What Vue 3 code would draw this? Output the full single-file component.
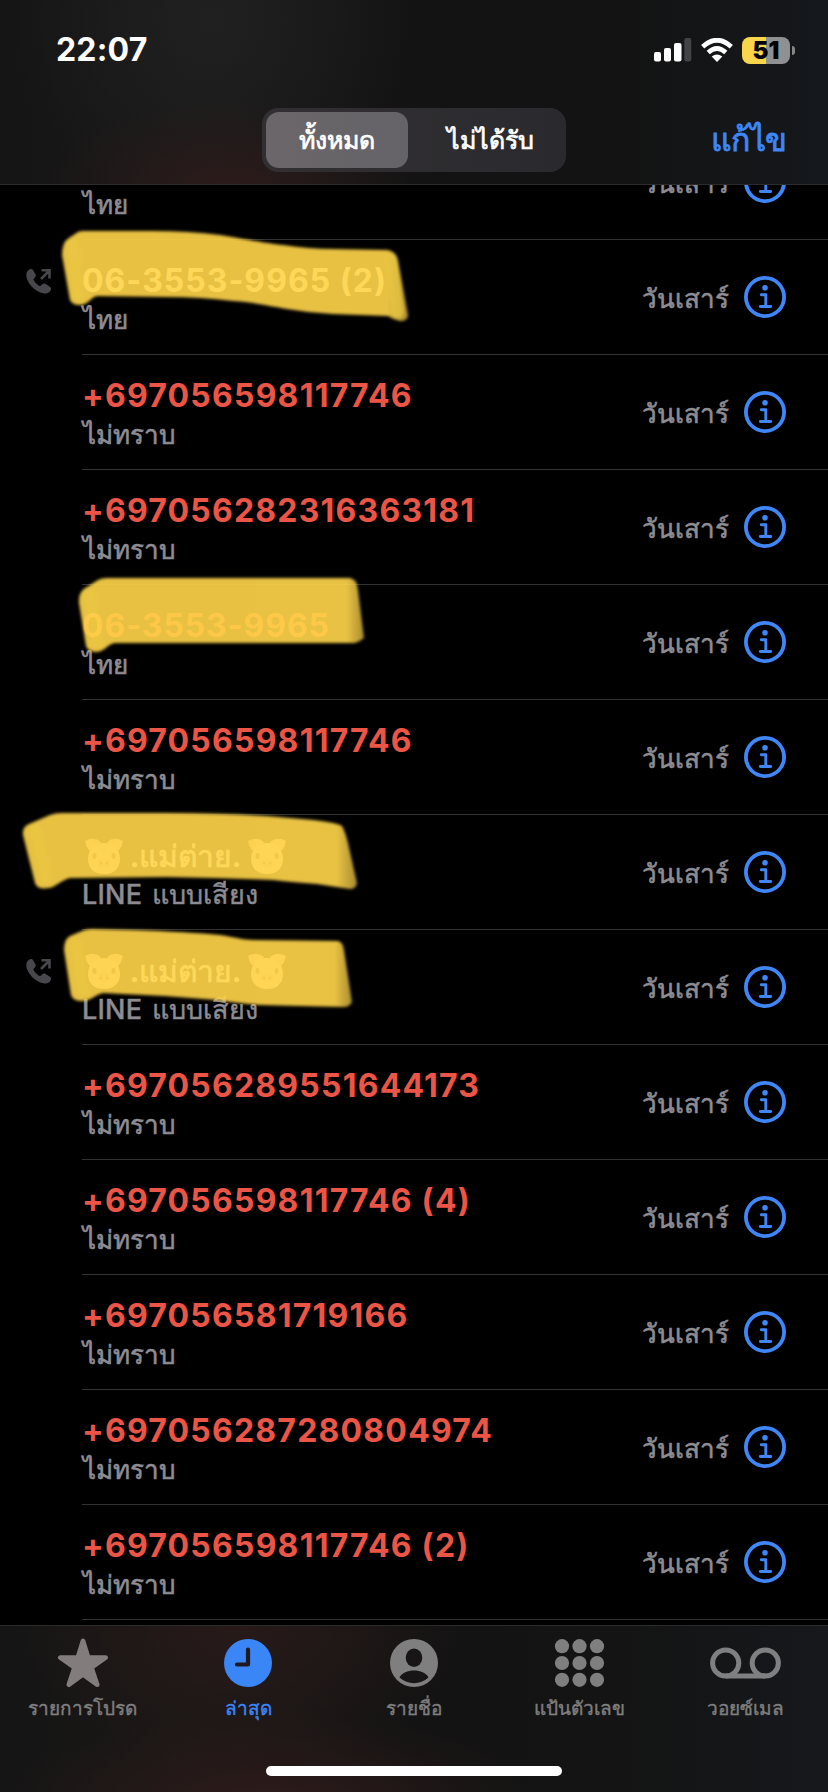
<script setup>
const rows = [
  { title: '', sub: 'ไทย' },
  {
    title: '06-3553-9965 (2)', sub: 'ไทย', kind: 'known', outgoing: true,
    brush: 'M62 15Q62 2 69-2L78-8Q80-9 84-9H150Q190-9 220-5C250 0 270 4 283 5Q310 9 333 9L387 10Q396 11 398 20L408 75Q408 81 400 81Q394 80 388 76L333 74Q310 73 287 69C265 65 250 62 233 61Q200 57 167 57L97 56C91 57 88 65 80 65Q72 65 70 60Z',
    ends: ['M73 4L78 55', 'M391 20L398 72']
  },
  { title: '+697056598117746', sub: 'ไม่ทราบ' },
  { title: '+697056282316363181', sub: 'ไม่ทราบ' },
  {
    title: '06-3553-9965', sub: 'ไทย', kind: 'spaced',
    brush: 'M79 18Q78 6 87 2L98-5Q102-7 107-7H350Q357-6 358 5L364 53Q361 56 355 58H115C109 58 104 67 97 67Q88 67 86 61Z',
    ends: ['M90 10L97 57']
  },
  { title: '+697056598117746', sub: 'ไม่ทราบ' },
  {
    title: '.แม่ต่าย.', sub: 'LINE แบบเสียง', kind: 'known', pigs: true,
    brush: 'M23 20Q22 12 29 9L50 0Q55-2 62-2L167-2Q220-2 267 1L313 5Q338 8 342 11Q345 16 348 28L357 68Q356 74 350 74L317 69Q290 67 273 65Q220 63 167 62L70 63C61 65 55 73 48 73Q37 75 35 68Z',
    ends: ['M36 16L46 62']
  },
  {
    title: '.แม่ต่าย.', sub: 'LINE แบบเสียง', kind: 'known', pigs: true, outgoing: true,
    brush: 'M64 20Q64 9 70 6L82 1Q86-1 92-1L133 0Q190 2 220 5C235 7 243 10 253 10L338 11Q343 12 344 20L352 72Q350 77 343 77L260 75Q235 73 217 70Q160 65 103 63C96 64 91 71 82 71Q73 71 71 65Z',
    ends: ['M76 14L83 61']
  },
  { title: '+697056289551644173', sub: 'ไม่ทราบ' },
  { title: '+697056598117746 (4)', sub: 'ไม่ทราบ' },
  { title: '+697056581719166', sub: 'ไม่ทราบ' },
  { title: '+697056287280804974', sub: 'ไม่ทราบ' },
  { title: '+697056598117746 (2)', sub: 'ไม่ทราบ' }
]
const dots = [8, 25.5, 43]
</script>

<template>
  <div class="phone">
    <svg class="defs" width="0" height="0">
      <defs>
        <linearGradient id="marker">
          <stop offset="0" stop-color="#fed449" />
          <stop offset=".94" stop-color="#fed449" />
          <stop offset="1" stop-color="#fed449" stop-opacity=".72" />
        </linearGradient>
        <g id="pig">
          <path d="M0 4Q9-1 16 5L8 16Q2 14 0 4ZM38 4Q29-1 22 5L30 16Q36 14 38 4Z" fill="#f0b4b4" />
          <path d="M19 6C29 6 35 13 35 22C35 31 29 37 19 37S3 31 3 22C3 13 9 6 19 6Z" fill="#ffd9d0" />
          <ellipse cx="9.500" cy="19" rx="2" ry="3" fill="#604848" />
          <ellipse cx="28.500" cy="19" rx="2" ry="3" fill="#604848" />
          <ellipse cx="19" cy="26" rx="7" ry="5" fill="#f4c3be" />
          <circle cx="16" cy="26" r="1.500" fill="#905858" />
          <circle cx="22" cy="26" r="1.500" fill="#905858" />
        </g>
      </defs>
    </svg>
    <header class="header">
      <div class="status">
        <span class="time">22:07</span>
        <div class="indicators">
          <svg width="38" height="24" viewBox="0 0 38 24" fill="#fff">
            <rect x="0" y="14" width="7" height="9.500" rx="2" />
            <rect x="10" y="10" width="7" height="13.500" rx="2" />
            <rect x="20" y="5" width="7.500" height="18.500" rx="2" />
            <rect x="30.300" y="0" width="7" height="23.500" rx="2" fill="#424346" />
          </svg>
          <svg class="wifi" width="32" height="24" viewBox="0 0 32 24" fill="none" stroke="#fff" stroke-width="4.700">
            <path d="M1.700 8.700Q16-4.300 30.300 8.700" />
            <path d="M7.200 14.500Q16 6.500 24.800 14.500" />
            <path d="M16 24L10.700 18.600Q16 14.400 21.300 18.600Z" fill="#fff" stroke="none" />
          </svg>
          <span class="battery">51</span>
          <span class="nub" />
        </div>
      </div>
      <div class="nav">
        <div class="segments">
          <span class="segment on">ทั้งหมด</span>
          <span class="segment">ไม่ได้รับ</span>
        </div>
        <span class="edit">แก้ไข</span>
      </div>
    </header>

    <main class="list">
      <div v-for="(row, i) in rows" :key="i" class="row">
        <div class="lead">
          <svg v-if="row.outgoing" width="26" height="26" viewBox="0 0 26 26">
            <path d="M4 1.200C1.500 2.500 0 4.500 .3 8C1 15 9 24.500 18.500 25.500C22 25.800 24.500 24 25 21.300C25.200 20 24.500 19.300 23.500 18.600L19.700 16C18.300 15.200 17 15.500 16 16.600L14.800 17.800C14.200 18.200 13.600 18.100 13 17.700C10.800 16.200 8.900 14.200 7.700 12.200C7.300 11.500 7.400 11 7.900 10.500L9 9.300C9.900 8.300 10 7.300 9.300 6L7 2C6.300 .8 5 .7 4 1.200Z" fill="#48484c" />
            <path d="M15 11L23 3M15.500 2.300H23.500V10.500" fill="none" stroke="#48484c" stroke-width="2.600" />
          </svg>
        </div>
        <div class="body">
          <div class="text">
            <div class="title" :class="row.kind">
              <svg v-if="row.pigs" class="pig" width="38" height="38"><use href="#pig" /></svg>
              <span :class="{ thai: row.pigs }">{{ row.title }}</span>
              <svg v-if="row.pigs" class="pig" width="38" height="38"><use href="#pig" /></svg>
            </div>
            <div class="sub" :class="{ line: row.pigs }">{{ row.sub }}</div>
          </div>
          <span class="day">วันเสาร์</span>
          <svg class="info" width="42" height="42" viewBox="0 0 42 42" fill="none" stroke="#3f86f7">
            <circle cx="21" cy="21" r="19.100" stroke-width="3.800" />
            <circle cx="21" cy="11.700" r="2.800" fill="#3f86f7" stroke="none" />
            <path d="M17.300 18.700H21.800V30.500M16.300 30.500H26.700" stroke-width="2.900" stroke-linecap="round" stroke-linejoin="round" />
          </svg>
        </div>
        <svg v-if="row.brush" class="brush" width="828" height="115" viewBox="0 0 828 115">
          <g opacity=".915">
            <path :d="row.brush" fill="url(#marker)" />
            <path v-for="end in row.ends" :key="end" :d="end" fill="none" stroke="#ffda48" stroke-width="12" stroke-linecap="round" opacity=".7" />
          </g>
        </svg>
      </div>
    </main>

    <footer class="tabs">
      <div class="tab-row">
        <div class="tab">
          <svg width="52" height="50" viewBox="-.5 0 53 50" fill="#827d7c" stroke="#827d7c" stroke-width="5" stroke-linejoin="round">
            <path d="M26 2.700L31.200 19.500H49L34.500 29.700L40.300 47L26 36.600L11.700 47L17.500 29.700L3 19.500H20.800Z" />
          </svg>
          <span>รายการโปรด</span>
        </div>
        <div class="tab on">
          <svg width="48" height="48" viewBox="0 0 48 48">
            <circle cx="24" cy="24" r="24" fill="#3b86f7" />
            <path d="M24 10.500V25.500H13" fill="none" stroke="#1e1a20" stroke-width="4.200" stroke-linecap="round" stroke-linejoin="round" />
          </svg>
          <span>ล่าสุด</span>
        </div>
        <div class="tab">
          <svg width="48" height="48" viewBox="0 0 48 48">
            <circle cx="24" cy="24" r="24" fill="#807f7f" />
            <ellipse cx="24" cy="18.700" rx="8.300" ry="9.200" fill="#171516" />
            <path d="M9.500 38.500C14 29.200 34 29.200 38.500 38.500C30 46 18 46 9.500 38.500Z" fill="#171516" />
          </svg>
          <span>รายชื่อ</span>
        </div>
        <div class="tab">
          <svg width="51" height="48" viewBox="0 0 51 48" fill="#7f7f7f">
            <template v-for="(y, r) in [7.2, 24, 40.8]" :key="r">
              <circle v-for="x in dots" :key="x" :cx="x" :cy="y" r="7.100" />
            </template>
          </svg>
          <span>แป้นตัวเลข</span>
        </div>
        <div class="tab">
          <svg width="71" height="48" viewBox="0 0 71 48" fill="none" stroke="#7f8081" stroke-width="5">
            <circle cx="15.700" cy="24" r="13.100" />
            <circle cx="55.300" cy="24" r="13.100" />
            <path d="M15.700 37H55.300" />
          </svg>
          <span>วอยซ์เมล</span>
        </div>
      </div>
      <div class="home" />
    </footer>
  </div>
</template>

<style>
html, body { background: #000; }
</style>

<style scoped>
.phone {
  width: 828px;
  height: 1792px;
  display: flex;
  flex-direction: column;
  overflow: hidden;
  background: #000;
  font-family: Inter, "Noto Sans", "Liberation Sans", sans-serif;
}
.defs { position: absolute; }
.header {
  flex: none;
  box-sizing: border-box;
  height: 185px;
  border-bottom: 1px solid #2c2c2d;
  background:
    radial-gradient(ellipse 190px 90px at 230px 190px, #2c1b1a, transparent),
    radial-gradient(ellipse 200px 200px at 210px 20px, #202020, transparent),
    linear-gradient(90deg, #151515, #191818 25%, #131313 50%, #131313 75%, #15181c);
}
.status {
  height: 100px;
  display: flex;
  align-items: center;
  justify-content: space-between;
  padding: 0 33px 0 56px;
}
.time { color: #fff; font-size: 32px; font-weight: 750; letter-spacing: .2px; line-height: 40px; }
.indicators { display: flex; align-items: center; }
.wifi { margin-left: 9px; }
.battery {
  width: 48px;
  height: 27px;
  margin-left: 9px;
  border-radius: 8px;
  background: linear-gradient(90deg, #f8d64c 50%, #8f9091 50%);
  color: #000;
  font-size: 24px;
  font-weight: 900;
  line-height: 27px;
  text-align: center;
}
.nub { width: 3px; height: 9px; margin-left: 2px; border-radius: 0 4px 4px 0; background: #858687; }
.nav {
  display: grid;
  grid-template-columns: 1fr 304px 1fr;
  align-items: center;
  padding: 8px 41px 0;
}
.segments {
  box-sizing: border-box;
  grid-column: 2;
  height: 64px;
  display: flex;
  padding: 4px;
  border-radius: 16px;
  background: linear-gradient(90deg, #322f32, #2a2a2e);
}
.segment {
  flex: none;
  width: 142px;
  border-radius: 13px;
  color: #fff;
  font-size: 25px;
  font-weight: 500;
  line-height: 56px;
  text-align: center;
  -webkit-text-stroke: .7px currentColor;
}
.segment + .segment { margin-left: 11px; }
.segment.on { background: linear-gradient(90deg, #6b666a, #646367); }
.edit {
  color: #3f86f7;
  font-size: 32px;
  letter-spacing: -.4px;
  line-height: 64px;
  text-align: right;
  -webkit-text-stroke: .8px currentColor;
}
.list { flex: 1; min-height: 0; overflow: hidden; }
.row { position: relative; height: 115px; display: flex; }
.row:first-child { margin-top: -60px; }
.lead { flex: none; width: 57px; padding: 28px 0 0 26px; box-sizing: border-box; }
.body {
  flex: 1;
  min-width: 0;
  box-sizing: border-box;
  display: flex;
  align-items: center;
  margin-left: 25px;
  padding-right: 42px;
  border-bottom: 1px solid #323234;
}
.text { flex: 1; height: 86px; white-space: nowrap; }
.title {
  height: 40px;
  display: flex;
  align-items: center;
  padding-top: 7px;
  color: #ea5546;
  font-size: 32px;
  font-weight: 700;
  letter-spacing: 1.2px;
  line-height: 40px;
}
.title.known { color: #fff; letter-spacing: 1px; }
.title.spaced { letter-spacing: .9px; }
.thai {
  padding: 0 4px 0 7px;
  font-size: 30px;
  font-weight: 500;
  letter-spacing: 0;
  -webkit-text-stroke: .7px currentColor;
}
.pig { margin-left: 3px; }
.sub {
  padding-left: 1px;
  color: #8d8c92;
  font-size: 26px;
  font-weight: 500;
  line-height: 38px;
  -webkit-text-stroke: .6px currentColor;
}
.sub.line { padding-left: 0; font-size: 27px; word-spacing: 2px; letter-spacing: .2px; -webkit-text-stroke-width: .4px; }
.day {
  padding-top: 4px;
  color: #8d8c92;
  font-size: 26px;
  line-height: 40px;
  margin-right: 15px;
  -webkit-text-stroke: .6px currentColor;
}
.info { flex: none; }
.brush { position: absolute; left: 0; top: 0; overflow: visible; filter: blur(1.7px); }
.tabs {
  flex: none;
  box-sizing: border-box;
  height: 167px;
  border-top: 1px solid #2c2c2d;
  background:
    radial-gradient(ellipse 260px 90px at 270px 175px, #2d1b1a, transparent),
    radial-gradient(ellipse 220px 150px at 240px 0, #271a19, transparent),
    linear-gradient(90deg, #151515, #1a1716 25%, #141313 50%, #141414 75%, #16181c);
}
.tab-row { height: 140px; display: grid; grid-template-columns: repeat(5, 1fr); }
.tab {
  display: flex;
  flex-direction: column;
  align-items: center;
  color: #7f7f7f;
  font-size: 19px;
  line-height: 30px;
  font-weight: 500;
  -webkit-text-stroke: .4px currentColor;
}
.tab svg { height: 50px; margin: 12px 0 6px; }
.tab.on { color: #3b86f7; }
.home { width: 296px; height: 10px; margin: 0 auto; border-radius: 5px; background: #fff; }
</style>
